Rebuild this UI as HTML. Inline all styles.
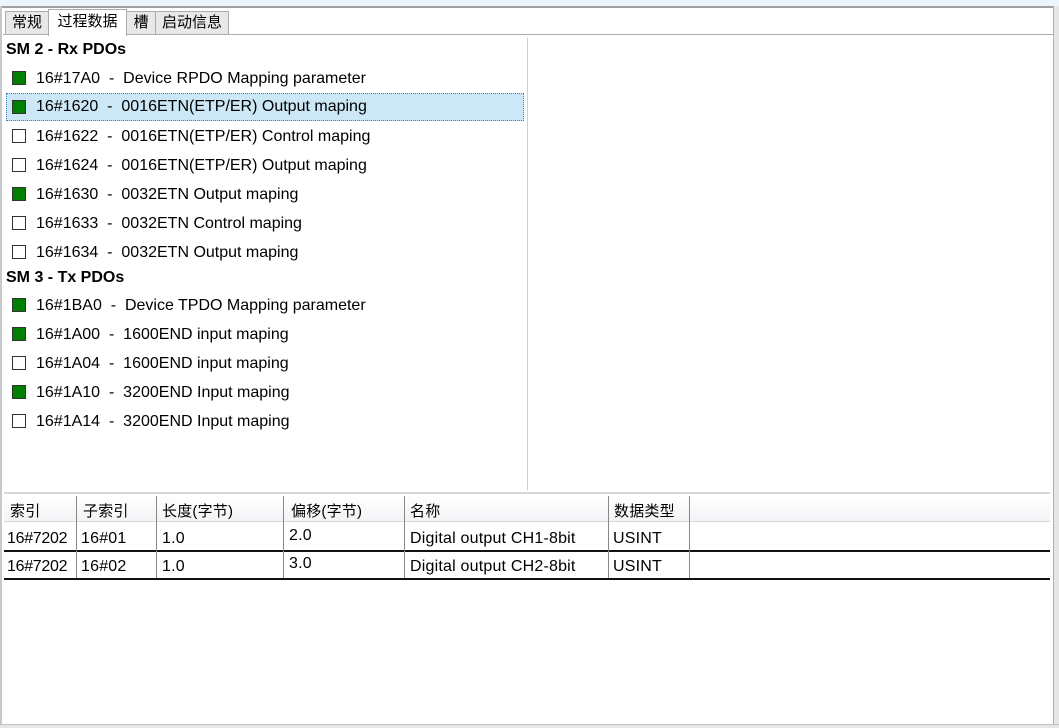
<!DOCTYPE html>
<html><head><meta charset="utf-8"><style>
*{margin:0;padding:0;box-sizing:border-box}
body{width:1059px;height:728px;background:#fff;position:relative;overflow:hidden;font-family:"Liberation Sans","Noto Sans CJK SC",sans-serif;color:#000}
.a{position:absolute}
.tab{position:absolute;top:11px;height:24px;border:1px solid #acacac;border-bottom:none;background:#e8e8e8;font-size:15px;line-height:22px;text-align:center}
.row{position:absolute;left:6px;width:518px;height:25px;font-size:16px;line-height:25px;white-space:pre}
.row span{position:absolute;left:30px;top:1px}
.cb{position:absolute;left:6px;top:6px;width:14px;height:14px;border:1px solid #333;background:#fff}
.cb.g{background:#008000}
.hd{position:absolute;left:6px;font-size:16px;font-weight:bold}
.cell{position:absolute;font-size:16px;white-space:nowrap;letter-spacing:0.2px}
.vl{position:absolute;width:1px;background:#888}
</style></head><body>
<div class="a" style="left:0;top:0;width:1059px;height:6px;background:#eef4fb"></div>
<div class="a" style="left:0;top:6px;width:1059px;height:2px;background:#a0a0a0"></div>
<div class="a" style="left:1053px;top:6px;width:6px;height:722px;background:#e6e6e6;border-left:1px solid #b0b0b0"></div>
<div class="a" style="left:0;top:6px;width:2px;height:722px;background:#c8c8c8"></div>
<div class="a" style="left:0;top:724px;width:1059px;height:4px;background:#e6e6e6;border-top:1px solid #c0c0c0"></div>

<div class="tab" style="left:5px;width:44px">常规</div>
<div class="tab" style="left:48px;top:9px;height:27px;width:79px;background:#fff;line-height:24px;z-index:2">过程数据</div>
<div class="tab" style="left:126px;width:30px">槽</div>
<div class="tab" style="left:155px;width:74px">启动信息</div>
<div class="a" style="left:3px;top:34px;width:1050px;height:1px;background:#acacac"></div>

<div class="a" style="left:527px;top:38px;width:1px;height:452px;background:#cfcfcf"></div>

<div class="hd" style="top:41px">SM 2 - Rx PDOs</div>
<div class="row" style="top:65px"><i class="cb g"></i><span>16#17A0  -  Device RPDO Mapping parameter</span></div>
<div class="row" style="top:93px;height:28px;background:#cce8f7;border:1px dotted #3c7fb1"><i class="cb g" style="left:5px;top:6px"></i><span style="left:29px;top:0">16#1620  -  0016ETN(ETP/ER) Output maping</span></div>
<div class="row" style="top:123px"><i class="cb"></i><span>16#1622  -  0016ETN(ETP/ER) Control maping</span></div>
<div class="row" style="top:152px"><i class="cb"></i><span>16#1624  -  0016ETN(ETP/ER) Output maping</span></div>
<div class="row" style="top:181px"><i class="cb g"></i><span>16#1630  -  0032ETN Output maping</span></div>
<div class="row" style="top:210px"><i class="cb"></i><span>16#1633  -  0032ETN Control maping</span></div>
<div class="row" style="top:239px"><i class="cb"></i><span>16#1634  -  0032ETN Output maping</span></div>
<div class="hd" style="top:269px">SM 3 - Tx PDOs</div>
<div class="row" style="top:292px"><i class="cb g"></i><span>16#1BA0  -  Device TPDO Mapping parameter</span></div>
<div class="row" style="top:321px"><i class="cb g"></i><span>16#1A00  -  1600END input maping</span></div>
<div class="row" style="top:350px"><i class="cb"></i><span>16#1A04  -  1600END input maping</span></div>
<div class="row" style="top:379px"><i class="cb g"></i><span>16#1A10  -  3200END Input maping</span></div>
<div class="row" style="top:408px"><i class="cb"></i><span>16#1A14  -  3200END Input maping</span></div>

<div class="a" style="left:4px;top:492px;width:1046px;height:2px;background:#d8d8d8"></div>
<div class="a" style="left:4px;top:496px;width:1046px;height:26px;background:linear-gradient(#fff,#f2f3f5);border-bottom:1px solid #d8d8d8"></div>
<div class="a" style="left:4px;top:550px;width:1046px;height:2px;background:#111"></div>
<div class="a" style="left:4px;top:578px;width:1046px;height:2px;background:#111"></div>
<div class="vl" style="left:76px;top:496px;height:82px"></div>
<div class="vl" style="left:156px;top:496px;height:82px"></div>
<div class="vl" style="left:283px;top:496px;height:82px"></div>
<div class="vl" style="left:404px;top:496px;height:82px"></div>
<div class="vl" style="left:608px;top:496px;height:82px"></div>
<div class="vl" style="left:689px;top:496px;height:82px"></div>

<div class="cell" style="left:10px;top:500px;font-size:15px">索引</div>
<div class="cell" style="left:83px;top:500px;font-size:15px">子索引</div>
<div class="cell" style="left:162px;top:500px;font-size:15px">长度(字节)</div>
<div class="cell" style="left:291px;top:500px;font-size:15px">偏移(字节)</div>
<div class="cell" style="left:410px;top:500px;font-size:15px">名称</div>
<div class="cell" style="left:614px;top:500px;font-size:15px">数据类型</div>

<div class="cell" style="left:7px;top:530px;letter-spacing:-0.3px">16#7202</div>
<div class="cell" style="left:81px;top:530px">16#01</div>
<div class="cell" style="left:162px;top:530px">1.0</div>
<div class="cell" style="left:289px;top:527px">2.0</div>
<div class="cell" style="left:410px;top:530px">Digital output CH1-8bit</div>
<div class="cell" style="left:613px;top:530px">USINT</div>

<div class="cell" style="left:7px;top:558px;letter-spacing:-0.3px">16#7202</div>
<div class="cell" style="left:81px;top:558px">16#02</div>
<div class="cell" style="left:162px;top:558px">1.0</div>
<div class="cell" style="left:289px;top:555px">3.0</div>
<div class="cell" style="left:410px;top:558px">Digital output CH2-8bit</div>
<div class="cell" style="left:613px;top:558px">USINT</div>
</body></html>
